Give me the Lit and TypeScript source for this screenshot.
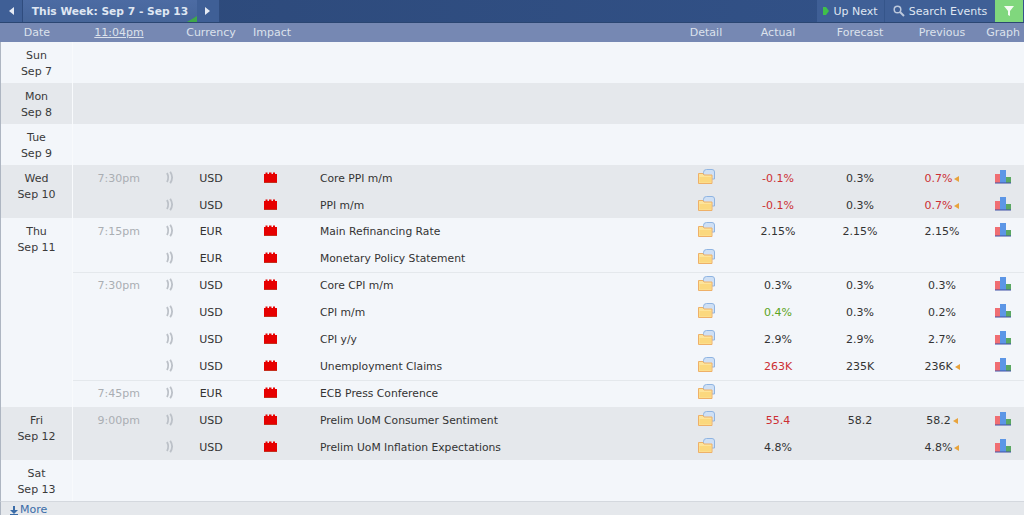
import { LitElement, html, css, svg, nothing } from "lit";
import { customElement } from "lit/decorators.js";

type Ev = { t?: string; c: string; n: string; a?: string; at?: string; f?: string; p?: string; pr?: boolean; g?: boolean; sep?: boolean };
type Day = { d: string; s: string; alt?: boolean; tight?: boolean; ev?: Ev[] };

const days: Day[] = [
  { d: "Sun", s: "Sep 7" },
  { d: "Mon", s: "Sep 8", alt: true },
  { d: "Tue", s: "Sep 9" },
  { d: "Wed", s: "Sep 10", alt: true, tight: true, ev: [
    { t: "7:30pm", c: "USD", n: "Core PPI m/m", a: "-0.1%", at: "bad", f: "0.3%", p: "0.7%", pr: true, g: true },
    { c: "USD", n: "PPI m/m", a: "-0.1%", at: "bad", f: "0.3%", p: "0.7%", pr: true, g: true },
  ] },
  { d: "Thu", s: "Sep 11", ev: [
    { t: "7:15pm", c: "EUR", n: "Main Refinancing Rate", a: "2.15%", f: "2.15%", p: "2.15%", g: true },
    { c: "EUR", n: "Monetary Policy Statement" },
    { t: "7:30pm", c: "USD", n: "Core CPI m/m", a: "0.3%", f: "0.3%", p: "0.3%", g: true, sep: true },
    { c: "USD", n: "CPI m/m", a: "0.4%", at: "good", f: "0.3%", p: "0.2%", g: true },
    { c: "USD", n: "CPI y/y", a: "2.9%", f: "2.9%", p: "2.7%", g: true },
    { c: "USD", n: "Unemployment Claims", a: "263K", at: "bad", f: "235K", p: "236K", pr: false, g: true },
    { t: "7:45pm", c: "EUR", n: "ECB Press Conference", sep: true },
  ] },
  { d: "Fri", s: "Sep 12", alt: true, tight: true, ev: [
    { t: "9:00pm", c: "USD", n: "Prelim UoM Consumer Sentiment", a: "55.4", at: "bad", f: "58.2", p: "58.2", pr: false, g: true },
    { c: "USD", n: "Prelim UoM Inflation Expectations", a: "4.8%", p: "4.8%", pr: false, g: true },
  ] },
  { d: "Sat", s: "Sep 13" },
];

const sound = svg`<svg class="ic up1" width="8" height="13" viewBox="0 0 8 13" fill="none" stroke="#bcc1c8" stroke-width="1.8"><path d="M1 2Q3.400 6.500 1 11"/><path d="M4.200 .8Q8 6.500 4.200 12.200"/></svg>`;
const impact = svg`<svg class="ic up1" width="13" height="11" viewBox="0 0 13 11"><path d="M0 2H1.500V.5H3.500V2H5V.5H7.500V2H9V.5H11V2H13V11H0Z" fill="#e60000"/><path d="M0 10H13V11H0Z" fill="#c4301f"/></svg>`;
const folder = svg`<svg class="ic up2" width="17" height="15" viewBox="0 0 17 15"><path d="M5.500 10V3.500Q5.500 .5 8.500 .5H14Q16.500 .5 16.500 3V10Z" fill="#cfe0f5" stroke="#8fb4e2"/><path d="M.5 4.500H5L6 6H14V14.500H.5Z" fill="#fde49a" stroke="#eeb068"/><path d="M1.500 8H13V13.500H1.500Z" fill="#fbd87e"/></svg>`;
const graph = svg`<svg class="ic up2" width="16" height="14" viewBox="0 0 16 14"><path d="M0 4H5V13H0Z" fill="#f06e72"/><path d="M5 0H11V13H5Z" fill="#5c96e6"/><path d="M11 7H16V13H11Z" fill="#5aa862"/><path d="M0 12H16V14H0Z" fill="#3f4fa5" opacity=".5"/></svg>`;

@customElement("app-root")
export class AppRoot extends LitElement {
  static styles = css`
    :host { display: block; width: 1024px; height: 515px; overflow: hidden; font-family: "DejaVu Sans", Verdana, sans-serif; font-size: 11px; color: #333; background: #f3f6fa; }
    .top { display: flex; height: 23px; background: linear-gradient(90deg, #2c4878, #33538a); border-bottom: 1px solid #2b4672; box-sizing: border-box; color: #dfe6f2; align-items: stretch; }
    .cell { display: flex; align-items: center; justify-content: center; background: #3f5f96; position: relative; }
    .arrow { width: 23px; border-right: 1px solid #2f4c7e; box-sizing: border-box; }
    .week { width: 174px; background: linear-gradient(#4c6ba3, #466599); font-weight: bold; font-size: 10.7px; }
    .corner { position: absolute; right: 0; bottom: 0; width: 0; height: 0; border-left: 10px solid transparent; border-bottom: 6px solid #3fa84a; }
    .spacer { flex: 1; }
    .upnext { width: 68px; gap: 4px; border-right: 1px solid #35558a; box-sizing: border-box; }
    .search { width: 110px; gap: 4px; }
    .filter { width: 28px; background: #80d77d; margin-right: 1px; }
    .grid { display: grid; grid-template-columns: 82px 30px 52px 66px 372px 62px 82px 82px 82px 40px; }
    .head { height: 19px; background: #7688b3; color: #dce2ec; align-items: center; padding-left: 1px; grid-template-columns: 72px 82px 30px 52px 66px 372px 62px 82px 82px 82px 40px; }
    .head > span { text-align: center; white-space: nowrap; }
    .head .now { text-decoration: underline; padding-left: 10px; }
    .head .imp { margin-left: 4px; }
    .body { border-left: 1px solid #aeb6c2; }
    .day { display: flex; min-height: 41px; background: #f3f6fa; }
    .day.alt { background: #e5e8ec; }
    .day.tight { height: 53px; }
    .date { width: 72px; flex: none; border-right: 1px solid #f8fafc; text-align: center; line-height: 15.5px; padding-top: 6px; box-sizing: border-box; color: #3a3a3a; }
    .rows { flex: 1; min-width: 0; }
    .row { height: 27px; align-items: center; text-align: center; }
    .row.sep { box-shadow: inset 0 1px 0 #e4e8ec; }
    .time { color: #aaaeb3; text-align: right; padding-right: 15px; }
    .ev { text-align: left; padding-left: 17px; white-space: nowrap; font-size: 10.75px; }
    .ic { display: block; margin: 0 auto; }
    .up1 { margin-top: -2px; }
    .up2 { margin-top: -4px; }
    .bad { color: #cc2f33; }
    .good { color: #5ba321; }
    .rev { display: inline-block; margin-left: 2px; border-style: solid; border-width: 3px 5px 3px 0; border-color: transparent #e8a33c transparent transparent; }
    .more { height: 14px; background: #e5e8ec; border-top: 1px solid #d4d8de; border-left: 1px solid #aeb6c2; box-sizing: border-box; padding: 3px 0 0 9px; display: flex; align-items: flex-start; gap: 2px; color: #3a6ca8; line-height: 10px; overflow: hidden; }
    .more svg { margin-top: 1px; }
  `;

  render() {
    return html`
      <div class="top">
        <div class="cell arrow"><svg width="6" height="8" viewBox="0 0 6 8"><path d="M6 0V8L1 4Z" fill="#e6ebf4"/></svg></div>
        <div class="cell week">This Week: Sep 7 - Sep 13<span class="corner"></span></div>
        <div class="cell arrow"><svg width="6" height="8" viewBox="0 0 6 8"><path d="M0 0V8L5 4Z" fill="#e6ebf4"/></svg></div>
        <div class="spacer"></div>
        <div class="cell upnext"><svg width="6" height="8" viewBox="0 0 6 8"><path d="M0 0H3L6 4L3 8H0Z" fill="#3fc04a"/></svg><span>Up Next</span></div>
        <div class="cell search"><svg width="12" height="12" viewBox="0 0 12 12" fill="none" stroke="#bcc8dc" stroke-width="1.500"><circle cx="4.500" cy="4.500" r="3.300"/><path d="M7 7L11 11" stroke-width="2"/></svg><span>Search Events</span></div>
        <div class="cell filter"><svg width="10" height="10" viewBox="0 0 10 10"><path d="M0 0H10L6 5V10L4 9V5Z" fill="#f4fbf3"/></svg></div>
      </div>
      <div class="grid head">
        <span>Date</span><span class="now">11:04pm</span><span></span>
        <span>Currency</span><span class="imp">Impact</span><span></span>
        <span>Detail</span><span>Actual</span><span>Forecast</span><span>Previous</span><span>Graph</span>
      </div>
      <div class="body">
        ${days.map((d) => html`
          <div class="day ${d.alt ? "alt" : ""} ${d.tight ? "tight" : ""}">
            <div class="date">${d.d}<br />${d.s}</div>
            <div class="rows">
              ${(d.ev ?? []).map((e) => html`
                <div class="grid row ${e.sep ? "sep" : ""}">
                  <span class="time">${e.t ?? ""}</span>
                  <span>${sound}</span>
                  <span>${e.c}</span>
                  <span>${impact}</span>
                  <span class="ev">${e.n}</span>
                  <span>${folder}</span>
                  <span class="${e.at ?? ""}">${e.a ?? ""}</span>
                  <span>${e.f ?? ""}</span>
                  <span class="${e.pr ? "bad" : ""}">${e.p ?? ""}${e.p && e.pr !== undefined ? html`<i class="rev"></i>` : nothing}</span>
                  <span>${e.g ? graph : nothing}</span>
                </div>`)}
            </div>
          </div>`)}
      </div>
      <div class="more"><svg width="8" height="9" viewBox="0 0 8 9"><path d="M3 0H5V4H8L4 8L0 4H3ZM0 8H8V9H0Z" fill="#3a6ca8"/></svg><span>More</span></div>
    `;
  }
}
